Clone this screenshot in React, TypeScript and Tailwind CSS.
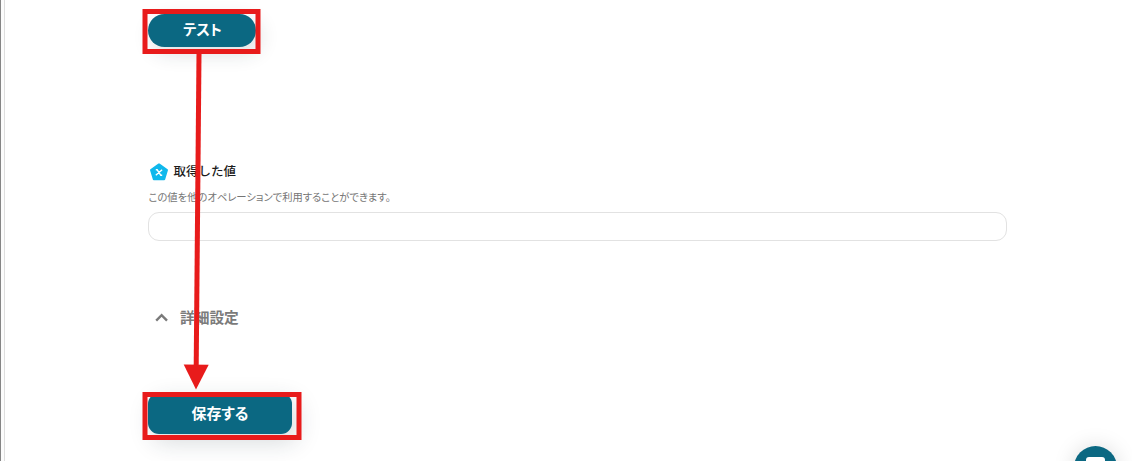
const FONT = "font-['Noto_Sans_CJK_JP',sans-serif]"

function ValueIcon() {
  return (
    <svg width="20" height="19" viewBox="0 0 20 19" className="shrink-0">
      <path
        d="M10 2.4 L18 8 L15.2 17.2 L4.8 17.2 L2 8 Z"
        fill="#10b8ec"
        stroke="#10b8ec"
        strokeWidth="2"
        strokeLinejoin="round"
      />
      <path d="M6.8 7.8 H8.2 L11.8 13.3 H13.2 M13.1 7.8 L6.8 13.3" fill="none" stroke="#fff" strokeWidth="1.4" />
    </svg>
  )
}

function ChevronUp() {
  return (
    <svg width="14" height="10" viewBox="0 0 14 10" className="shrink-0">
      <path d="M1.2 8.6 L6.6 3.2 L12 8.6" fill="none" stroke="#7a7a7a" strokeWidth="2.4" />
    </svg>
  )
}

// Red frames and arrow drawn over the form
function Annotations() {
  return (
    <svg width="1132" height="461" viewBox="0 0 1132 461" className="pointer-events-none absolute left-0 top-0">
      <g fill="none" stroke="#e81b1b" strokeWidth="5">
        <rect x="145" y="11.5" width="113" height="40" />
        <rect x="145" y="394.5" width="154" height="43" />
        <path d="M199 53 L196.2 366" />
      </g>
      <path d="M183.7 364.5 L208.7 364.7 L196 389.5 Z" fill="#e81b1b" />
    </svg>
  )
}

export default function App() {
  return (
    <div className={`relative flex h-[461px] w-[1132px] overflow-hidden bg-white ${FONT}`}>
      <div className="w-[5px] shrink-0 border-l border-r border-l-[#858585] border-r-[#dedede] bg-[#fcfcfc]" />

      <main className="flex w-[1002px] flex-col items-start pl-[143px] pt-3.5">
        <button className="h-[33px] w-[108px] rounded-full bg-[#0b6882] pb-0.5 pl-px text-[14.4px] font-bold leading-none text-white shadow-[4px_6px_20px_rgba(30,50,60,0.16)] [font-feature-settings:'palt']">
          テスト
        </button>

        <section className="mt-[114px] w-full">
          <div className="flex h-5 items-center gap-[4.5px] pl-px">
            <ValueIcon />
            <h2 className="text-[12.5px] font-medium leading-5 text-[#1c1c1c]">取得した値</h2>
          </div>
          <p className="mt-1.5 h-5 whitespace-nowrap pl-[0.5px] text-[10.3px] leading-5 text-[#757575] [font-feature-settings:'palt']">
            この値を他のオペレーションで利用することができます。
          </p>
          <input className="mt-[5px] block h-[29px] w-full rounded-[11px] border border-[#e2e2e2] bg-white px-3 text-xs" />
        </section>

        <div className="mt-[66px] flex h-5 items-center gap-[11px] pl-[7px] text-[#7b7b7b]">
          <ChevronUp />
          <span className="text-[14.7px] font-bold leading-5">詳細設定</span>
        </div>

        <button className="mt-[66px] h-[41px] w-36 rounded-[11px] bg-[#0b6882] text-[14.9px] font-bold leading-none text-white shadow-[5px_8px_24px_rgba(30,50,60,0.18)] [font-feature-settings:'palt']">
          保存する
        </button>
      </main>

      {/* Chat launcher */}
      <button className="absolute left-[1074px] top-[446px] flex h-[43px] w-[43px] justify-center rounded-full bg-[#0b6882] pt-[11px] shadow-[0_1px_22px_rgba(0,0,0,0.15)]">
        <span className="h-5 w-[19px] rounded-[3px] bg-white" />
      </button>

      <Annotations />
    </div>
  )
}
